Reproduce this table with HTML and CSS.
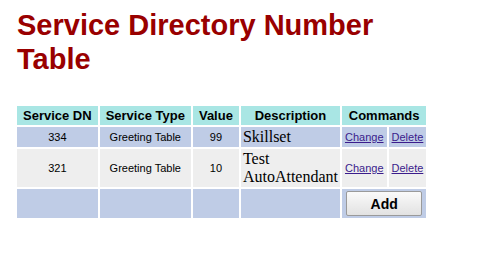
FILE: index.html
```html
<!DOCTYPE html>
<html>
<head>
<meta charset="utf-8">
<title>Service Directory Number Table</title>
<link rel="stylesheet" href="styles.css">
</head>
<body>
<h1 class="title">Service Directory Number Table</h1>
<table class="sdn">
  <tr class="head">
    <th>Service DN</th>
    <th>Service Type</th>
    <th>Value</th>
    <th>Description</th>
    <th colspan="2">Commands</th>
  </tr>
  <tr class="odd">
    <td class="small">334</td>
    <td class="small">Greeting Table</td>
    <td class="small">99</td>
    <td class="desc">Skillset</td>
    <td class="cmd"><a href="#">Change</a></td>
    <td class="cmd"><a href="#">Delete</a></td>
  </tr>
  <tr class="even">
    <td class="small">321</td>
    <td class="small">Greeting Table</td>
    <td class="small">10</td>
    <td class="desc">Test<br>AutoAttendant</td>
    <td class="cmd"><a href="#">Change</a></td>
    <td class="cmd"><a href="#">Delete</a></td>
  </tr>
  <tr class="odd">
    <td></td>
    <td></td>
    <td></td>
    <td></td>
    <td colspan="2" class="add-cell"><button class="add" type="button">Add</button></td>
  </tr>
</table>
</body>
</html>
```
FILE: styles.css
```css
body {
  margin: 0;
  padding: 8px 17px;
  font-family: "Liberation Sans", Arial, sans-serif;
  background: #fff;
}

.title {
  margin: 0 0 28px;
  font-size: 29px;
  line-height: 34px;
  font-weight: bold;
  color: #990000;
  width: 400px;
}

.sdn {
  border-collapse: separate;
  border-spacing: 2px;
  margin-left: -2px;
}

.sdn th {
  background: #a9e6e4;
  font-size: 13px;
  font-weight: bold;
  padding: 2px 6px;
  line-height: 15px;
  color: #000;
}

.sdn td {
  padding: 1px 3px;
  text-align: center;
}

.odd td { background: #bfcce6; }
.even td { background: #eeeeee; }

.small {
  font-size: 11px;
}

.sdn td.desc {
  font-family: "Liberation Serif", "Times New Roman", serif;
  font-size: 16px;
  padding: 1px 2px;
  text-align: left;
}

.cmd {
  font-size: 11px;
}

.cmd a {
  color: #3b1c8c;
  text-decoration: underline;
}

.sdn td.add-cell {
  padding: 2px;
}

.add {
  display: block;
  margin: 0 auto;
  width: 76px;
  height: 25px;
  font-family: "Liberation Sans", Arial, sans-serif;
  font-size: 14px;
  font-weight: bold;
  color: #000;
  border: 1px solid #9a9a9a;
  border-radius: 2px;
  background: linear-gradient(#fafafa, #e2e2e2);
}
```
